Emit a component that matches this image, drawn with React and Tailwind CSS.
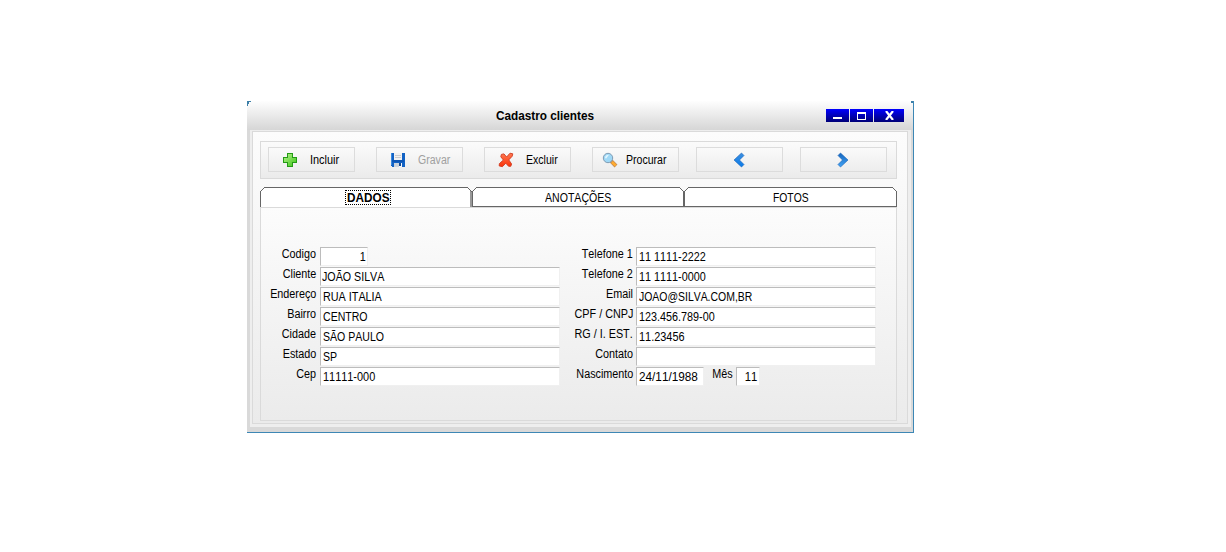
const leftFields = [
  ["Codigo", "1", "w-12 justify-end pr-px", "origin-right scale-x-90"],
  ["Cliente", "JOÃO SILVA", "w-60", "origin-left scale-x-[0.89] -ml-px"],
  ["Endereço", "RUA ITALIA", "w-60", "origin-left scale-x-[0.9]"],
  ["Bairro", "CENTRO", "w-60", "origin-left scale-x-[0.88]"],
  ["Cidade", "SÃO PAULO", "w-60", "origin-left scale-x-[0.88]"],
  ["Estado", "SP", "w-60", "origin-left scale-x-[0.88]"],
  ["Cep", "11111-000", "w-60", "origin-left scale-x-[0.91]"],
];

const rightFields = [
  ["Telefone 1", "11 1111-2222", "w-60", "origin-left scale-x-[0.9]"],
  ["Telefone 2", "11 1111-0000", "w-60", "origin-left scale-x-[0.9]"],
  ["Email", "JOAO@SILVA.COM,BR", "w-60", "origin-left scale-x-[0.87]"],
  ["CPF / CNPJ", "123.456.789-00", "w-60", "origin-left scale-x-[0.9]"],
  ["RG / I. EST.", "11.23456", "w-60", "origin-left scale-x-[0.91]"],
  ["Contato", "", "w-60", ""],
  ["Nascimento", "24/11/1988", "w-[68px]", "origin-left scale-x-[0.98]"],
];

function Field({ value, box, text }) {
  return (
    <div className={`flex h-[19px] shrink-0 border border-t-[#bcbcbc] border-l-[#bcbcbc] border-r-[#f0f0f0] border-b-[#f0f0f0] bg-white pl-[2px] ${box}`}>
      <span className={`h-[17px] leading-[18px] whitespace-pre ${text}`}>{value}</span>
    </div>
  );
}

function Label({ children, width }) {
  return (
    <div className={`flex h-[14px] shrink-0 justify-end leading-[14px] ${width}`}>
      <span className="origin-right scale-x-[0.9] whitespace-pre">{children}</span>
    </div>
  );
}

function PlusIcon() {
  return (
    <svg width="16" height="16" viewBox="0 0 16 16" shapeRendering="crispEdges">
      <defs>
        <linearGradient id="plus" x1="0" y1="0" x2="1" y2="1">
          <stop offset="0" stopColor="#b6f28a" />
          <stop offset="1" stopColor="#3ec51b" />
        </linearGradient>
      </defs>
      <path d="M5 1H11V5H15V11H11V15H5V11H1V5H5Z" fill="#249a16" />
      <path d="M6 2H10V6H14V10H10V14H6V10H2V6H6Z" fill="url(#plus)" />
    </svg>
  );
}

function DiskIcon() {
  return (
    <svg width="16" height="16" viewBox="0 0 16 16" shapeRendering="crispEdges">
      <path d="M1 1H15V15H2V14H1Z" fill="#1262c4" />
      <path d="M1 1H2V13H1Z" fill="#3c8be0" />
      <path d="M4 1H12V8H4Z" fill="#f1f1f1" />
      <path d="M5 3H11V4H5ZM5 5H11V6H5Z" fill="#c9cbce" />
      <path d="M2 8H14V10H2Z" fill="#0d55b4" />
      <path d="M4 11H12V15H4Z" fill="#c9d2dc" />
      <path d="M9 11H12V15H9Z" fill="#f5f7f9" />
      <path d="M9 11H11V14H9Z" fill="#174b91" />
    </svg>
  );
}

function CrossIcon() {
  return (
    <svg width="16" height="16" viewBox="0 0 16 16">
      <defs>
        <linearGradient id="cross" x1="0" y1="0" x2="0" y2="1">
          <stop offset="0" stopColor="#ff7a52" />
          <stop offset="1" stopColor="#fb3208" />
        </linearGradient>
      </defs>
      <path d="M3.4 2.4L6 1.9L8.6 5L12 1.2L14.8 1.8L14.2 4.2L10.8 7.9L13.6 12L12.8 14.3L10.6 14.3L7.8 11.2L4.4 14.7L1.2 13.9L1.4 11.6L5.4 8L2.8 4.8Z" fill="url(#cross)" stroke="#cf3b20" strokeWidth="0.9" />
    </svg>
  );
}

function SearchIcon() {
  return (
    <svg width="16" height="16" viewBox="0 0 16 16">
      <path d="M9.2 9.2L14 14" stroke="#c08a55" strokeWidth="4" />
      <path d="M10 10L13.7 13.7" stroke="#ffab30" strokeWidth="2.6" />
      <circle cx="6" cy="6" r="4.7" fill="#9fd8f6" stroke="#7f9cb4" />
      <path d="M3 5.8Q3.5 2.7 7 2.8L4 6.7Z" fill="#e0f6ff" />
    </svg>
  );
}

function Chevron({ right }) {
  return (
    <svg width="16" height="16" viewBox="0 0 16 16">
      <defs>
        <linearGradient id={right ? "next" : "prev"} x1="0" y1="0" x2="0" y2="1">
          <stop offset="0" stopColor={right ? "#1565bd" : "#3d8fe0"} />
          <stop offset="1" stopColor={right ? "#42a4f5" : "#087bea"} />
        </linearGradient>
      </defs>
      <path
        d={right ? "M3 3.5L5.5 1L13 8L5.5 15L3 12.5L7.5 8Z" : "M13 3.5L10.5 1L3 8L10.5 15L13 12.5L8.5 8Z"}
        fill={right ? "url(#next)" : "url(#prev)"}
        stroke="#1460b5"
        strokeWidth="0.6"
      />
    </svg>
  );
}

function ToolButton({ icon, label, margin = "", disabled, iconPad, gap = "", scale }) {
  return (
    <button className={`flex h-[25px] w-[87px] shrink-0 items-center border border-[#dcdcdc] bg-linear-to-b from-[#fafafa] to-[#ededed] ${margin} ${iconPad} ${gap} ${disabled ? "text-[#a0a0a0]" : "text-black"}`}>
      {icon}
      {label && <span className={`origin-left leading-4 whitespace-pre ${scale}`}>{label}</span>}
    </button>
  );
}

function Tab({ label, selected, width, scale, labelPad }) {
  return (
    <div className={`relative flex h-5 shrink-0 ${width} ${labelPad}`}>
      <svg className="absolute inset-0 h-full w-full" viewBox="0 0 212 20" preserveAspectRatio="none" shapeRendering="crispEdges">
        <path d="M0 20V5L5 0H207L212 5V20Z" fill="#fff" />
        <path d="M0.5 20V4.5L4.5 0.5H207.5L211.5 4.5V20" fill="none" stroke="#666" />
        {selected ? <path d="M210.5 4V20M211.5 5V20" stroke="#999" /> : <path d="M0 19.5H212" stroke="#666" />}
      </svg>
      <span className={`relative mt-1 h-[15px] origin-left leading-[15px] whitespace-pre ${scale}`}>{label}</span>
      {selected && <span className="absolute top-[3px] left-[85px] h-[15px] w-[46px] border border-dotted border-black" />}
    </div>
  );
}

export default function App() {
  return (
    <main className="h-[552px] w-[1226px] overflow-hidden bg-white pt-[101px] pl-[247px] font-['Liberation_Sans',sans-serif] text-xs text-black [font-kerning:none]">
      <section className="relative flex h-[332px] w-[667px] flex-col border-r border-b border-[#3d87b5] bg-[#d9d9d9]">
        <div className="absolute top-0 left-0 h-px w-1 bg-[#3d7fa8]" />
        <div className="absolute top-0 left-0 h-[5px] w-px bg-[#3d7fa8]" />
        <div className="absolute top-px left-px h-[2px] w-px bg-[#3d7fa8]" />
        <div className="absolute top-0 right-0 h-[2px] w-[2px] bg-[#3d7fa8]" />
        <header className="flex h-[29px] shrink-0 bg-linear-to-b from-[#fefefe] to-[#d6d6d6] pl-[249px]">
          <h1 className="w-[330px] pt-[6px] leading-[18px] font-bold whitespace-pre">
            <span className="inline-block origin-left scale-x-[0.98]">Cadastro clientes</span>
          </h1>
          <div className="mt-2 flex h-[13px] gap-px">
            <button className="flex w-[23px] items-end justify-center bg-linear-to-b from-[#0000ff] to-[#000078] pb-[3px]">
              <span className="h-[2px] w-[9px] bg-white" />
            </button>
            <button className="flex w-[23px] items-center justify-center bg-linear-to-b from-[#0000ff] to-[#000078]">
              <span className="mt-px h-2 w-[9px] border border-t-2 border-white" />
            </button>
            <button className="flex w-[30px] items-center justify-center bg-linear-to-b from-[#0000ff] to-[#000078]">
              <svg width="9" height="9" viewBox="0 0 9 9">
                <path d="M1 0L8 9M8 0L1 9" stroke="#fff" strokeWidth="2.2" />
              </svg>
            </button>
          </div>
        </header>
        <div className="mr-[2px] ml-[3px] h-[297px] bg-[#eeeeee] pt-px pr-[3px] pl-[2px]">
          <div className="h-[293px] border border-[#dadada] bg-linear-to-b from-[#fcfcfc] to-[#ebebeb] pt-[9px] pl-[7px]">
            <nav className="flex h-[38px] w-[637px] border border-[#dadada] bg-linear-to-b from-[#fbfbfb] to-[#ebebeb] pt-[5px] pl-[7px]">
              <ToolButton icon={<PlusIcon />} label="Incluir" iconPad="pl-[13px]" gap="gap-3" scale="scale-x-[0.91]" />
              <ToolButton icon={<DiskIcon />} label="Gravar" margin="ml-[21px]" iconPad="pl-[13px]" gap="gap-3" scale="scale-x-[0.88]" disabled />
              <ToolButton icon={<CrossIcon />} label="Excluir" margin="ml-[21px]" iconPad="pl-[13px]" gap="gap-3" scale="scale-x-[0.88]" />
              <ToolButton icon={<SearchIcon />} label="Procurar" margin="ml-[21px]" iconPad="pl-[9px]" gap="gap-2" scale="scale-x-[0.88]" />
              <ToolButton icon={<Chevron />} margin="ml-[17px]" iconPad="pl-[34px]" />
              <ToolButton icon={<Chevron right />} margin="ml-[17px]" iconPad="pl-[34px]" />
            </nav>
            <div className="mt-2 flex">
              <Tab label="DADOS" selected width="w-[212px] font-bold" labelPad="pl-[87px]" scale="scale-x-[0.98]" />
              <Tab label="ANOTAÇÕES" width="w-[212px]" labelPad="pl-[73px]" scale="scale-x-[0.88]" />
              <Tab label="FOTOS" width="w-[213px]" labelPad="pl-[89px]" scale="scale-x-[0.86]" />
            </div>
            <div className="flex h-[214px] w-[637px] border border-[#dadada] bg-linear-to-b from-[#fcfcfc] to-[#ebebeb] pt-[39px]">
              <div className="flex flex-col">
                {leftFields.map(([label, value, box, text]) => (
                  <div key={label} className="flex h-5">
                    <Label width="w-[59px] pr-1">{label}</Label>
                    <Field value={value} box={box} text={text} />
                  </div>
                ))}
              </div>
              <div className="flex flex-col">
                {rightFields.map(([label, value, box, text]) => (
                  <div key={label} className="flex h-5">
                    <Label width="w-[76px] pr-[3px]">{label}</Label>
                    <Field value={value} box={box} text={text} />
                    {label === "Nascimento" && (
                      <>
                        <Label width="w-8 pr-[3px]">Mês</Label>
                        <Field value="11" box="w-6 justify-end pr-[2px]" text="origin-right scale-x-[0.94]" />
                      </>
                    )}
                  </div>
                ))}
              </div>
            </div>
          </div>
        </div>
      </section>
    </main>
  );
}
